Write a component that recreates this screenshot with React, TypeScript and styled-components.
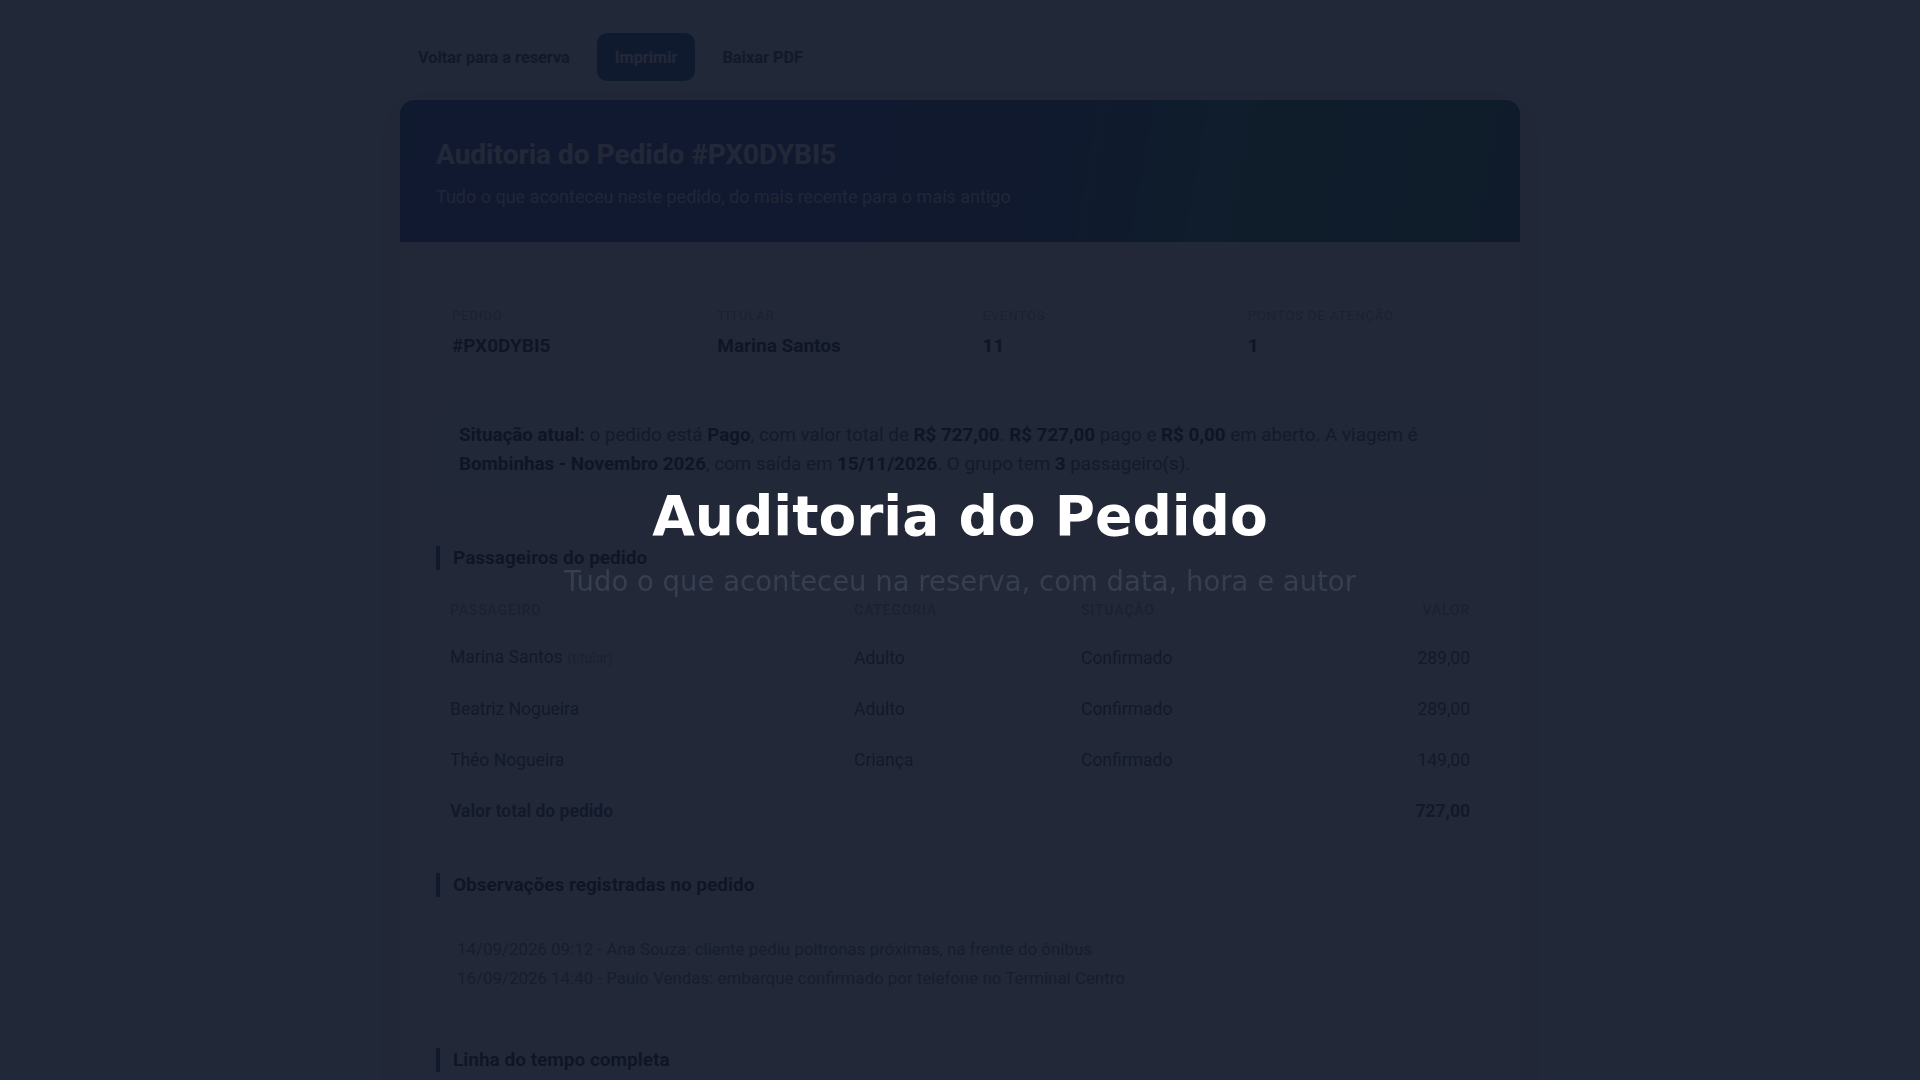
import styled, { createGlobalStyle } from "styled-components";

const GlobalStyle = createGlobalStyle`
  * {
    box-sizing: border-box;
  }
  body {
    margin: 0;
    background: #f1f5f9;
    font-family: Roboto, "Liberation Sans", Arial, sans-serif;
    color: #1e293b;
  }
`;

const Page = styled.div`
  width: 1120px;
  margin: 0 auto;
  padding: 33px 0 60px;
`;

const Toolbar = styled.div`
  display: flex;
  align-items: center;
  gap: 9px;
  margin-bottom: 19px;
`;

const ToolButton = styled.button<{ $primary?: boolean }>`
  height: 48px;
  padding: 0 18px;
  border: none;
  border-radius: 10px;
  font-family: Roboto, "Liberation Sans", sans-serif;
  font-size: 16.3px;
  font-weight: 700;
  cursor: pointer;
  background: ${(p) => (p.$primary ? "#1e4a9e" : "transparent")};
  color: ${(p) => (p.$primary ? "#ffffff" : "#334155")};
`;

const Card = styled.div`
  background: #ffffff;
  border-radius: 14px;
  overflow: hidden;
  box-shadow: 0 10px 30px rgba(15, 23, 42, 0.08);
`;

const Header = styled.div`
  height: 142px;
  padding: 38px 36px 0;
  background: linear-gradient(100deg, #1e4a9e 0%, #1e4690 55%, #0f766e 74%, #115e59 100%);
  color: #ffffff;
  h1 {
    margin: 0 0 13px;
    font-size: 28px;
    line-height: 34px;
    font-weight: 700;
  }
  p {
    margin: 0;
    font-size: 18px;
    line-height: 24px;
    color: rgba(255, 255, 255, 0.85);
  }
`;

const Body = styled.div`
  padding: 36px 36px 40px;
`;

const Summary = styled.div`
  display: grid;
  grid-template-columns: repeat(4, 1fr);
  column-gap: 45px;
  padding: 30px 16px 26px;
  background: #f8fafc;
  border-radius: 12px;
`;

const SummaryLabel = styled.div`
  font-size: 13px;
  line-height: 16px;
  letter-spacing: 0.07em;
  text-transform: uppercase;
  color: #94a3b8;
  margin-bottom: 9px;
`;

const SummaryValue = styled.div`
  font-size: 19px;
  line-height: 25px;
  font-weight: 700;
  color: #0f172a;
`;

const Status = styled.p`
  margin: 18px 0 0;
  padding: 19px 23px;
  font-size: 18.8px;
  line-height: 29px;
  color: #475569;
  background: #eff6ff;
  border-radius: 12px;
  b {
    color: #0f172a;
  }
`;

const Section = styled.section<{ $gap: number }>`
  margin-top: ${(p) => p.$gap}px;
`;

const SectionTitle = styled.h2`
  margin: 0;
  padding-left: 13px;
  border-left: 4px solid #1e4a9e;
  font-size: 19px;
  line-height: 24px;
  font-weight: 700;
  color: #0f172a;
`;

const Table = styled.table`
  width: 100%;
  margin-top: 19px;
  border-collapse: collapse;
`;

const Th = styled.th<{ $right?: boolean; $width?: number }>`
  padding: 13px 14px;
  font-size: 14px;
  line-height: 16px;
  font-weight: 500;
  letter-spacing: 0.06em;
  text-transform: uppercase;
  color: #94a3b8;
  text-align: ${(p) => (p.$right ? "right" : "left")};
  width: ${(p) => (p.$width ? `${p.$width}px` : "auto")};
  border-bottom: 1px solid #e2e8f0;
`;

const Td = styled.td<{ $right?: boolean; $bold?: boolean }>`
  padding: 14px;
  height: 51px;
  font-size: 17.5px;
  line-height: 22px;
  color: #334155;
  font-weight: ${(p) => (p.$bold ? 700 : 400)};
  text-align: ${(p) => (p.$right ? "right" : "left")};
  border-bottom: 1px solid #f1f5f9;
`;

const Muted = styled.span`
  font-size: 14px;
  color: #94a3b8;
`;

const Notes = styled.ul`
  list-style: none;
  margin: 18px 0 0;
  padding: 20px 21px;
  background: #f8fafc;
  border-radius: 12px;
  li {
    font-size: 16.9px;
    line-height: 29px;
    color: #64748b;
  }
`;

const Timeline = styled.ol`
  list-style: none;
  margin: 18px 0 0;
  padding: 0;
`;

const TimelineItem = styled.li`
  display: grid;
  grid-template-columns: 170px 1fr;
  gap: 16px;
  padding: 14px 16px;
  border-bottom: 1px solid #f1f5f9;
  font-size: 17px;
  line-height: 22px;
  color: #334155;
  time {
    color: #64748b;
  }
`;

const Overlay = styled.div`
  position: fixed;
  inset: 0;
  display: flex;
  flex-direction: column;
  align-items: center;
  justify-content: center;
  background: rgba(15, 22, 38, 0.92);
  font-family: "DejaVu Sans", sans-serif;
  z-index: 10;
`;

const OverlayTitle = styled.div`
  font-size: 55px;
  font-weight: 700;
  color: #ffffff;
  margin-bottom: 17px;
`;

const OverlaySubtitle = styled.div`
  font-size: 27.5px;
  color: #363e50;
`;

const summary = [
  { label: "Pedido", value: "#PX0DYBI5" },
  { label: "Titular", value: "Marina Santos" },
  { label: "Eventos", value: "11" },
  { label: "Pontos de atenção", value: "1" },
];

const passengers = [
  { name: "Marina Santos", holder: true, category: "Adulto", status: "Confirmado", value: "289,00" },
  { name: "Beatriz Nogueira", holder: false, category: "Adulto", status: "Confirmado", value: "289,00" },
  { name: "Théo Nogueira", holder: false, category: "Criança", status: "Confirmado", value: "149,00" },
];

const events = [
  { at: "16/09/2026 14:40", text: "Paulo Vendas registrou observação no pedido" },
  { at: "15/09/2026 10:05", text: "Pagamento de R$ 727,00 confirmado" },
  { at: "14/09/2026 09:12", text: "Ana Souza registrou observação no pedido" },
  { at: "14/09/2026 09:02", text: "Pedido criado por Ana Souza" },
];

export default function App() {
  return (
    <>
      <GlobalStyle />
      <Page>
        <Toolbar>
          <ToolButton>Voltar para a reserva</ToolButton>
          <ToolButton $primary>Imprimir</ToolButton>
          <ToolButton>Baixar PDF</ToolButton>
        </Toolbar>
        <Card>
          <Header>
            <h1>Auditoria do Pedido #PX0DYBI5</h1>
            <p>Tudo o que aconteceu neste pedido, do mais recente para o mais antigo</p>
          </Header>
          <Body>
            <Summary>
              {summary.map((s) => (
                <div key={s.label}>
                  <SummaryLabel>{s.label}</SummaryLabel>
                  <SummaryValue>{s.value}</SummaryValue>
                </div>
              ))}
            </Summary>
            <Status>
              <b>Situação atual:</b> o pedido está <b>Pago</b>, com valor total de <b>R$ 727,00</b>.{" "}
              <b>R$ 727,00</b> pago e <b>R$ 0,00</b> em aberto. A viagem é{" "}
              <b>Bombinhas - Novembro 2026</b>, com saída em <b>15/11/2026</b>. O grupo tem <b>3</b>{" "}
              passageiro(s).
            </Status>

            <Section $gap={48}>
              <SectionTitle>Passageiros do pedido</SectionTitle>
              <Table>
                <thead>
                  <tr>
                    <Th $width={404}>Passageiro</Th>
                    <Th $width={227}>Categoria</Th>
                    <Th>Situação</Th>
                    <Th $right $width={140}>Valor</Th>
                  </tr>
                </thead>
                <tbody>
                  {passengers.map((p) => (
                    <tr key={p.name}>
                      <Td>
                        {p.name} {p.holder && <Muted>(titular)</Muted>}
                      </Td>
                      <Td>{p.category}</Td>
                      <Td>{p.status}</Td>
                      <Td $right>{p.value}</Td>
                    </tr>
                  ))}
                  <tr>
                    <Td $bold>Valor total do pedido</Td>
                    <Td />
                    <Td />
                    <Td $right $bold>727,00</Td>
                  </tr>
                </tbody>
              </Table>
            </Section>

            <Section $gap={36}>
              <SectionTitle>Observações registradas no pedido</SectionTitle>
              <Notes>
                <li>14/09/2026 09:12 - Ana Souza: cliente pediu poltronas próximas, na frente do ônibus</li>
                <li>16/09/2026 14:40 - Paulo Vendas: embarque confirmado por telefone no Terminal Centro</li>
              </Notes>
            </Section>

            <Section $gap={35}>
              <SectionTitle>Linha do tempo completa</SectionTitle>
              <Timeline>
                {events.map((e) => (
                  <TimelineItem key={e.at + e.text}>
                    <time>{e.at}</time>
                    <span>{e.text}</span>
                  </TimelineItem>
                ))}
              </Timeline>
            </Section>
          </Body>
        </Card>
      </Page>
      <Overlay>
        <OverlayTitle>Auditoria do Pedido</OverlayTitle>
        <OverlaySubtitle>Tudo o que aconteceu na reserva, com data, hora e autor</OverlaySubtitle>
      </Overlay>
    </>
  );
}
